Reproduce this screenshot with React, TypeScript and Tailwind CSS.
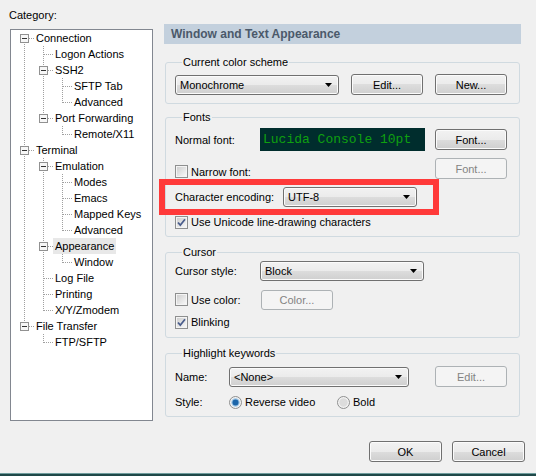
import React from "react";

type Node = { label: string; children?: Node[]; selected?: boolean };

const tree: Node[] = [
  {
    label: "Connection",
    children: [
      { label: "Logon Actions" },
      { label: "SSH2", children: [{ label: "SFTP Tab" }, { label: "Advanced" }] },
      { label: "Port Forwarding", children: [{ label: "Remote/X11" }] },
    ],
  },
  {
    label: "Terminal",
    children: [
      {
        label: "Emulation",
        children: [{ label: "Modes" }, { label: "Emacs" }, { label: "Mapped Keys" }, { label: "Advanced" }],
      },
      { label: "Appearance", selected: true, children: [{ label: "Window" }] },
      { label: "Log File" },
      { label: "Printing" },
      { label: "X/Y/Zmodem" },
    ],
  },
  { label: "File Transfer", children: [{ label: "FTP/SFTP" }] },
];

type Row = { node: Node; rails: boolean[]; last: boolean; first: boolean };

function flatten(nodes: Node[], rails: boolean[] = [], out: Row[] = []) {
  nodes.forEach((node, i) => {
    const last = i === nodes.length - 1;
    out.push({ node, rails, last, first: rails.length === 0 && i === 0 });
    if (node.children) flatten(node.children, [...rails, !last], out);
  });
  return out;
}

const DOT = "#a0a0a0";

function Rail({ on }: { on: boolean }) {
  return (
    <svg width="19" height="16" className="shrink-0" shapeRendering="crispEdges">
      {on && <line x1="9.5" y1="0" x2="9.5" y2="16" stroke={DOT} strokeDasharray="1 1" />}
    </svg>
  );
}

function Joint({ row }: { row: Row }) {
  const y1 = row.first ? 8 : 0;
  const y2 = row.last ? 9 : 16;
  return (
    <svg width="19" height="16" className="shrink-0" shapeRendering="crispEdges">
      <line x1="9.5" y1={y1} x2="9.5" y2={y2} stroke={DOT} strokeDasharray="1 1" />
      <line x1="10" y1="8.5" x2="19" y2="8.5" stroke={DOT} strokeDasharray="1 1" />
      {row.node.children && (
        <>
          <rect x="5.5" y="4.5" width="8" height="8" fill="#f7f7f7" stroke="#919191" />
          <line x1="7" y1="8.5" x2="12" y2="8.5" stroke="#333" />
        </>
      )}
    </svg>
  );
}

function Tree() {
  const rows = flatten(tree);
  return (
    <div className="w-[143px] h-[392px] border border-[#828790] bg-white pl-[4px] overflow-hidden">
      {rows.map((row, i) => (
        <div key={i} className="flex items-center h-[16px] whitespace-nowrap">
          {row.rails.map((on, j) => (
            <Rail key={j} on={on} />
          ))}
          <Joint row={row} />
          <span
            className={`px-[2px] leading-[16px] ${row.node.selected ? "bg-[#e8e8e8]" : ""}`}
          >
            {row.node.label}
          </span>
        </div>
      ))}
    </div>
  );
}

const btnFace =
  "border border-[#707070] rounded-[3px] bg-[linear-gradient(to_bottom,#f2f2f2_0%,#ebebeb_50%,#dddddd_50%,#cfcfcf_100%)] shadow-[inset_0_0_0_1px_#fbfbfb]";

function Button({ label, className, disabled }: { label: string; className: string; disabled?: boolean }) {
  return (
    <div
      className={`${className} flex items-center justify-center shrink-0 ${
        disabled
          ? "border border-[#adb2b5] rounded-[3px] bg-[#f4f4f4] text-[#838383]"
          : `${btnFace} text-black`
      }`}
    >
      {label}
    </div>
  );
}

function Combo({ value, className }: { value: string; className: string }) {
  return (
    <div className={`${className} h-[20px] flex items-center pl-[4px] pr-[6px] shrink-0 ${btnFace}`}>
      <span className="flex-1">{value}</span>
      <svg width="7" height="4" viewBox="0 0 7 4">
        <path d="M0 0H7L3.5 4Z" fill="#000" />
      </svg>
    </div>
  );
}

function Check({ checked, label, className }: { checked?: boolean; label: string; className?: string }) {
  return (
    <div className={`flex items-center h-[14px] ${className ?? ""}`}>
      <svg width="13" height="13" viewBox="0 0 13 13" className="shrink-0" shapeRendering="crispEdges">
        <defs>
          <linearGradient id="chk" x1="0" y1="0" x2="1" y2="1">
            <stop offset="0" stopColor="#cfcfcf" />
            <stop offset="1" stopColor="#f7f7f7" />
          </linearGradient>
        </defs>
        <rect x="0.5" y="0.5" width="12" height="12" fill="#f4f4f4" stroke="#8e8f8f" />
        <rect x="2" y="2" width="9" height="9" fill="url(#chk)" />
        {checked && (
          <path
            d="M3 6.5L5.3 9.2L10 3.3"
            fill="none"
            stroke="#4a5d8c"
            strokeWidth="1.8"
            shapeRendering="geometricPrecision"
          />
        )}
      </svg>
      <span className="ml-[3px]">{label}</span>
    </div>
  );
}

function Radio({ on, label, className }: { on?: boolean; label: string; className?: string }) {
  return (
    <div className={`flex items-center h-[14px] ${className ?? ""}`}>
      <svg width="13" height="13" viewBox="0 0 13 13" className="shrink-0">
        <circle cx="6.5" cy="6.5" r="6" fill="#f2f2f2" stroke="#8e8f8f" />
        <circle cx="6.5" cy="6.5" r="4.2" fill={on ? "#9cc4e4" : "#dcdcdc"} />
        {on && <circle cx="6.5" cy="6.5" r="3" fill="#1b64a8" />}
      </svg>
      <span className="ml-[3px]">{label}</span>
    </div>
  );
}

function Group({ title, className, children }: { title: string; className: string; children: React.ReactNode }) {
  return (
    <fieldset
      className={`${className} w-[355px] ml-[1px] border border-[#d0dae0] rounded-[3px] pl-[9px] pr-[12px]`}
    >
      <legend className="ml-[7px] px-[1px] leading-[14px]">{title}</legend>
      {children}
    </fieldset>
  );
}

export default function App() {
  return (
    <div
      className="relative w-[536px] h-[476px] bg-[#f0f0f0] flex flex-col text-[11px] leading-[14px] text-black overflow-hidden"
      style={{ fontFamily: '"Liberation Sans", Arial, sans-serif' }}
    >
      <div className="flex h-[421px]">
        <div className="w-[164px] pl-[10px] pt-[8px]">
          <div className="ml-[-1px] mb-[7px]">Category:</div>
          <Tree />
        </div>

        <div className="flex-1 pt-[24px]">
          <div className="w-[357px] h-[20px] bg-[#c3d0dd] pl-[7px] flex items-center font-bold text-[12px] text-[#4b596a]">
            Window and Text Appearance
          </div>

          <Group title="Current color scheme" className="mt-[11px] pt-[5px] pb-[8px]">
            <div className="flex items-center h-[21px]">
              <Combo value="Monochrome" className="w-[164px]" />
              <Button label="Edit..." className="w-[72px] h-[21px] ml-[12px]" />
              <Button label="New..." className="w-[72px] h-[21px] ml-[12px]" />
            </div>
          </Group>

          <Group title="Fonts" className="mt-[6px] pt-[4px] pb-[7px]">
            <div className="flex items-center h-[23px]">
              <span className="w-[85px]">Normal font:</span>
              <div
                className="w-[165px] h-[23px] bg-[#002d2d] text-[#0fa00f] text-[13px] pl-[3px] flex items-center"
                style={{ fontFamily: '"Liberation Mono", "Courier New", monospace' }}
              >
                Lucida Console 10pt
              </div>
              <Button label="Font..." className="w-[72px] h-[21px] ml-auto" />
            </div>
            <div className="flex items-center h-[21px] mt-[7px]">
              <Check label="Narrow font:" className="mt-[6px]" />
              <Button label="Font..." className="w-[72px] h-[21px] ml-auto" disabled />
            </div>
            <div className="flex items-center h-[20px] mt-[8px]">
              <span className="w-[108px]">Character encoding:</span>
              <Combo value="UTF-8" className="w-[134px]" />
            </div>
            <Check checked label="Use Unicode line-drawing characters" className="mt-[8px]" />
          </Group>

          <Group title="Cursor" className="mt-[8px] pt-[2px] pb-[8px]">
            <div className="flex items-center h-[20px]">
              <span className="w-[85px]">Cursor style:</span>
              <Combo value="Block" className="w-[164px]" />
            </div>
            <div className="flex items-center h-[21px] mt-[8px]">
              <Check label="Use color:" className="w-[86px]" />
              <Button label="Color..." className="w-[72px] h-[20px]" disabled />
            </div>
            <Check checked label="Blinking" className="mt-[5px]" />
          </Group>

          <Group title="Highlight keywords" className="mt-[8px] pt-[6px] pb-[7px]">
            <div className="flex items-center h-[21px]">
              <span className="w-[54px]">Name:</span>
              <Combo value="<None>" className="w-[180px]" />
              <Button label="Edit..." className="w-[72px] h-[21px] ml-auto" disabled />
            </div>
            <div className="flex items-center h-[14px] mt-[8px]">
              <span className="w-[54px]">Style:</span>
              <Radio on label="Reverse video" className="w-[108px]" />
              <Radio label="Bold" />
            </div>
          </Group>
        </div>
      </div>

      <div className="flex justify-end gap-[10px] pr-[11px] pt-[20px]">
        <Button label="OK" className="w-[73px] h-[21px]" />
        <Button label="Cancel" className="w-[73px] h-[21px]" />
      </div>
      <div className="flex-1" />
      <div className="h-[3px] border-t border-[#6f9c9c] bg-[#1e4848]" />

      <div className="absolute left-[159px] top-[179px] w-[280px] h-[36px] border-[6px] border-[#ff3a3a]" />
    </div>
  );
}
